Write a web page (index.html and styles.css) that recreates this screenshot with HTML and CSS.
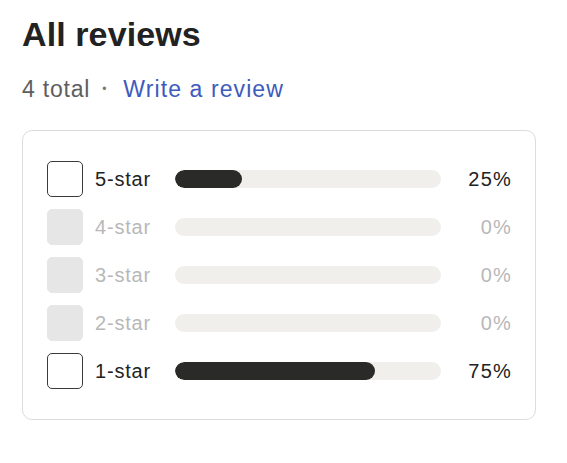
FILE: index.html
```html
<!DOCTYPE html>
<html lang="en">
<head>
<meta charset="utf-8">
<title>All reviews</title>
<link rel="stylesheet" href="styles.css">
</head>
<body>
<section class="reviews">
  <h2 class="reviews-title">All reviews</h2>
  <p class="reviews-meta">
    <span class="total">4 total</span>
    <span class="sep">•</span>
    <a class="write-link" href="#">Write a review</a>
  </p>
  <div class="breakdown">
    <label class="row">
      <span class="box"></span>
      <span class="label">5-star</span>
      <span class="track"><span class="fill" style="width:25%"></span></span>
      <span class="pct">25%</span>
    </label>
    <label class="row is-empty">
      <span class="box"></span>
      <span class="label">4-star</span>
      <span class="track"></span>
      <span class="pct">0%</span>
    </label>
    <label class="row is-empty">
      <span class="box"></span>
      <span class="label">3-star</span>
      <span class="track"></span>
      <span class="pct">0%</span>
    </label>
    <label class="row is-empty">
      <span class="box"></span>
      <span class="label">2-star</span>
      <span class="track"></span>
      <span class="pct">0%</span>
    </label>
    <label class="row">
      <span class="box"></span>
      <span class="label">1-star</span>
      <span class="track"><span class="fill" style="width:75%"></span></span>
      <span class="pct">75%</span>
    </label>
  </div>
</section>
</body>
</html>
```
FILE: styles.css
```css
* { box-sizing: border-box; }

body {
  margin: 0;
  background: #fff;
  font-family: "Liberation Sans", Arial, sans-serif;
  color: #222;
}

.reviews {
  padding: 12px 31px 0 22px;
}

.reviews-title {
  margin: 0;
  font-size: 34px;
  line-height: 44px;
  font-weight: 700;
  letter-spacing: 0.1px;
  color: #222;
}

.reviews-meta {
  margin: 19px 0 0;
  display: flex;
  align-items: center;
  font-size: 23px;
  line-height: 28px;
  letter-spacing: 0.8px;
}

.total { color: #5e5e5e; }

.sep {
  color: #777;
  font-size: 12px;
  margin: 0 16px 0 12px;
}

.write-link {
  color: #3d5bbd;
  text-decoration: none;
  letter-spacing: 1.1px;
}

.breakdown {
  margin-top: 27px;
  border: 1px solid #dcdcdc;
  border-radius: 10px;
  padding: 24px;
}

.row {
  display: flex;
  align-items: center;
  height: 48px;
  font-size: 20px;
  letter-spacing: 0.8px;
  color: #222;
}

.box {
  width: 36px;
  height: 36px;
  flex: none;
  border: 1px solid #3a3a3a;
  border-radius: 5px;
  background: #fff;
  margin-right: 12px;
}

.label {
  width: 68px;
  margin-right: 12px;
  flex: none;
}

.track {
  width: 266px;
  height: 18px;
  flex: none;
  border-radius: 9px;
  background: #f1efec;
  overflow: hidden;
}

.fill {
  display: block;
  height: 100%;
  border-radius: 9px;
  background: #2a2a28;
}

.pct {
  flex: 1;
  text-align: right;
  letter-spacing: 1.2px;
  margin-right: -1px;
}

.is-empty { color: #b8b8b8; }

.is-empty .box {
  border-color: #e6e6e6;
  background: #e6e6e6;
}
```
